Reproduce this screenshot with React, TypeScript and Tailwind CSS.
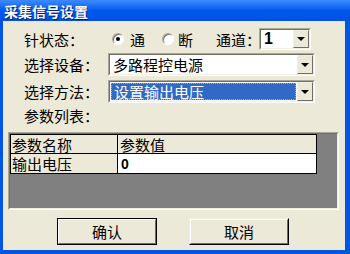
import React from "react";

const cjk = { fontFamily: '"Noto Sans CJK SC", "Noto Sans", sans-serif' };

function Arrow() {
  return (
    <div className="flex h-full w-[16px] items-center justify-center border border-t-[#F1EFE2] border-l-[#F1EFE2] border-b-[#716F64] border-r-[#716F64] bg-[#ECE9D8]">
      <div className="h-0 w-0 border-l-[4px] border-r-[4px] border-t-[4px] border-l-transparent border-r-transparent border-t-black" />
    </div>
  );
}

function Combo({
  w,
  h,
  children,
}: {
  w: string;
  h: string;
  children: React.ReactNode;
}) {
  return (
    <div
      className={`flex ${w} ${h} border border-t-[#ACA899] border-l-[#ACA899] border-b-white border-r-white`}
    >
      <div className="flex flex-1 border border-t-[#716F64] border-l-[#716F64] border-b-[#F1EFE2] border-r-[#F1EFE2] bg-white">
        <div className="flex min-w-0 flex-1 items-center">{children}</div>
        <Arrow />
      </div>
    </div>
  );
}

function Radio({ on }: { on: boolean }) {
  return (
    <div className="flex h-[12px] w-[12px] items-center justify-center rounded-full border border-t-[#ACA899] border-l-[#ACA899] border-b-white border-r-white bg-white shadow-[inset_1px_1px_0_#716F64]">
      {on && <div className="h-[4px] w-[4px] rounded-full bg-black" />}
    </div>
  );
}

export default function App() {
  return (
    <div
      className="flex h-[254px] w-[350px] flex-col bg-[#0055E5] text-[15px] leading-none text-black"
      style={cjk}
    >
      <div className="flex h-[21px] items-center bg-gradient-to-b from-[#3D8BFF] via-[#0058EE] to-[#0050E0] pl-[4px]">
        <span className="text-[14px] font-bold text-white [text-shadow:1px_1px_0_#0A1E6A]">
          采集信号设置
        </span>
      </div>
      <div className="ml-[3px] mr-[5px] mb-[4px] flex flex-1 flex-col bg-[#ECE9D8]">
        {/* row 1 */}
        <div className="ml-[21px] mt-[7px] flex h-[22px] items-center whitespace-nowrap">
          <span className="w-[88px]">针状态：</span>
          <Radio on={true} />
          <span className="ml-[6px] w-[32px]">通</span>
          <Radio on={false} />
          <span className="ml-[4px] w-[38px]">断</span>
          <span className="w-[43px] whitespace-nowrap">通道：</span>
          <Combo w="w-[52px]" h="h-[22px]">
            <span
              className="pl-[3px] text-[16px] font-bold"
              style={{ fontFamily: '"Liberation Sans", Arial, sans-serif' }}
            >
              1
            </span>
          </Combo>
        </div>
        {/* row 2 */}
        <div className="ml-[21px] mt-[3px] flex h-[23px] items-center">
          <span className="w-[84px]">选择设备：</span>
          <Combo w="w-[207px]" h="h-[23px]">
            <span className="pl-[3px]">多路程控电源</span>
          </Combo>
        </div>
        {/* row 3 */}
        <div className="ml-[21px] mt-[4px] flex h-[23px] items-center">
          <span className="w-[84px]">选择方法：</span>
          <Combo w="w-[207px]" h="h-[23px]">
            <div className="ml-[1px] mr-[1px] flex h-[17px] flex-1 items-center border border-dotted border-[#C8A94A] bg-[#316AC5] pl-[2px] text-white">
              设置输出电压
            </div>
          </Combo>
        </div>
        {/* list label */}
        <div className="ml-[21px] mt-[2px] flex h-[20px] items-center">参数列表：</div>
        {/* table */}
        <div className="ml-[5px] mt-[7px] h-[78px] w-[331px] border border-t-[#ACA899] border-l-[#ACA899] border-b-white border-r-white">
          <div className="h-full w-full border border-t-[#716F64] border-l-[#716F64] border-b-[#F1EFE2] border-r-[#F1EFE2] bg-[#808080]">
            <div className="w-[307px] border-l border-t border-black">
              <div className="flex h-[19px]">
                <div className="flex w-[107px] items-center border-b border-r border-black bg-[#ECE9D8] pl-[1px]">
                  参数名称
                </div>
                <div className="flex flex-1 items-center border-b border-r border-black bg-[#ECE9D8] pl-[2px]">
                  参数值
                </div>
              </div>
              <div className="flex h-[20px]">
                <div className="flex w-[107px] items-center border-b border-r border-black bg-[#ECE9D8] pl-[1px]">
                  输出电压
                </div>
                <div
                  className="flex flex-1 items-center border-b border-r border-black bg-white pl-[3px] text-[14px] font-bold"
                  style={{ fontFamily: '"Liberation Sans", Arial, sans-serif' }}
                >
                  0
                </div>
              </div>
            </div>
          </div>
        </div>
        {/* buttons */}
        <div className="ml-[54px] mt-[8px] flex gap-[32px]">
          <div className="flex h-[27px] w-[100px] border border-black">
            <div className="flex flex-1 items-center justify-center border border-t-white border-l-white border-b-[#716F64] border-r-[#716F64] bg-[#ECE9D8]">
              确认
            </div>
          </div>
          <div className="flex h-[27px] w-[100px] border border-t-[#F1EFE2] border-l-[#F1EFE2] border-b-black border-r-black">
            <div className="flex flex-1 items-center justify-center border border-t-white border-l-white border-b-[#716F64] border-r-[#716F64] bg-[#ECE9D8]">
              取消
            </div>
          </div>
        </div>
      </div>
    </div>
  );
}
